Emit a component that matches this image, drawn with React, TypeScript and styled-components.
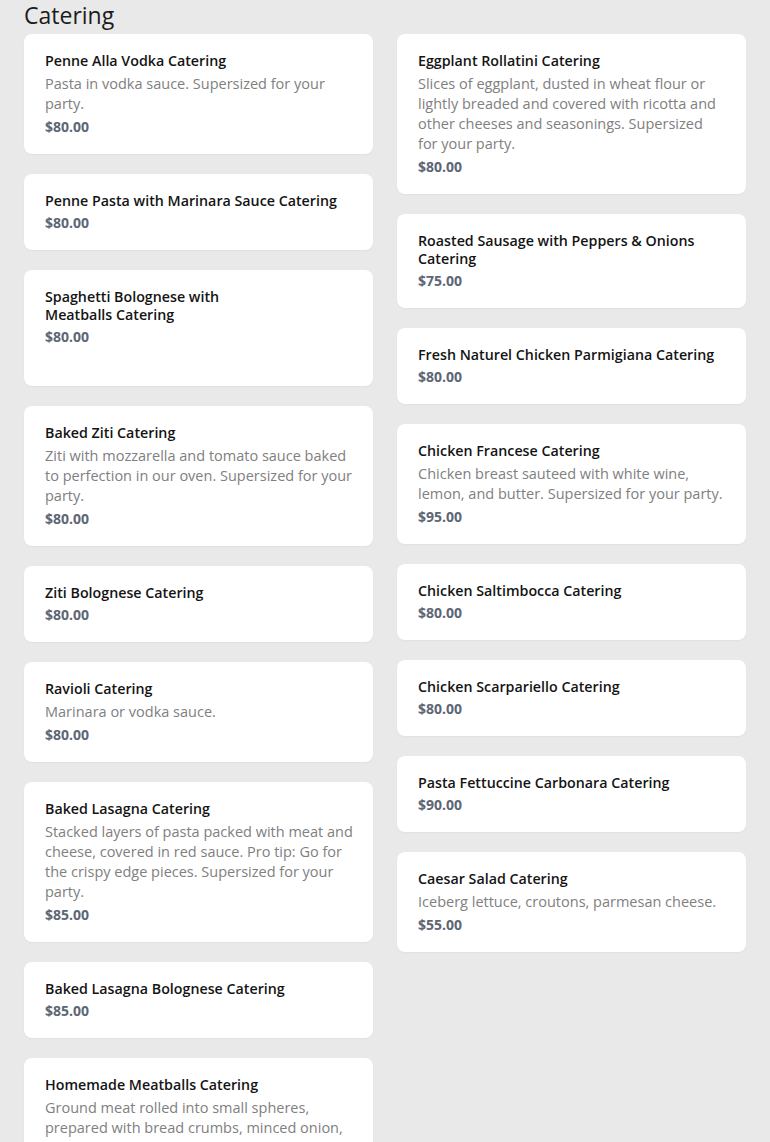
import styled, { createGlobalStyle } from "styled-components";

interface MenuItem {
  name: string;
  description?: string;
  price: string;
  hasImage?: boolean;
}

const leftItems: MenuItem[] = [
  {
    name: "Penne Alla Vodka Catering",
    description: "Pasta in vodka sauce. Supersized for your party.",
    price: "$80.00",
  },
  { name: "Penne Pasta with Marinara Sauce Catering", price: "$80.00" },
  { name: "Spaghetti Bolognese with Meatballs Catering", price: "$80.00", hasImage: true },
  {
    name: "Baked Ziti Catering",
    description:
      "Ziti with mozzarella and tomato sauce baked to perfection in our oven. Supersized for your party.",
    price: "$80.00",
  },
  { name: "Ziti Bolognese Catering", price: "$80.00" },
  { name: "Ravioli Catering", description: "Marinara or vodka sauce.", price: "$80.00" },
  {
    name: "Baked Lasagna Catering",
    description:
      "Stacked layers of pasta packed with meat and cheese, covered in red sauce. Pro tip: Go for the crispy edge pieces. Supersized for your party.",
    price: "$85.00",
  },
  { name: "Baked Lasagna Bolognese Catering", price: "$85.00" },
  {
    name: "Homemade Meatballs Catering",
    description:
      "Ground meat rolled into small spheres, prepared with bread crumbs, minced onion, eggs, butter and seasoning. Supersized for your party.",
    price: "$80.00",
  },
];

const rightItems: MenuItem[] = [
  {
    name: "Eggplant Rollatini Catering",
    description:
      "Slices of eggplant, dusted in wheat flour or lightly breaded and covered with ricotta and other cheeses and seasonings. Supersized for your party.",
    price: "$80.00",
  },
  { name: "Roasted Sausage with Peppers & Onions Catering", price: "$75.00" },
  { name: "Fresh Naturel Chicken Parmigiana Catering", price: "$80.00" },
  {
    name: "Chicken Francese Catering",
    description: "Chicken breast sauteed with white wine, lemon, and butter. Supersized for your party.",
    price: "$95.00",
  },
  { name: "Chicken Saltimbocca Catering", price: "$80.00" },
  { name: "Chicken Scarpariello Catering", price: "$80.00" },
  { name: "Pasta Fettuccine Carbonara Catering", price: "$90.00" },
  {
    name: "Caesar Salad Catering",
    description: "Iceberg lettuce, croutons, parmesan cheese.",
    price: "$55.00",
  },
];

const ItemCard = ({ item }: { item: MenuItem }) => (
  <Card>
    <CardText>
      <ItemName>{item.name}</ItemName>
      {item.description && <ItemDescription>{item.description}</ItemDescription>}
      <ItemPrice>{item.price}</ItemPrice>
    </CardText>
    {item.hasImage && <ImageSlot />}
  </Card>
);

const App = () => {
  return (
    <>
      <GlobalStyle />
      <Page>
        <SectionTitle>Catering</SectionTitle>
        <Columns>
          <Column>
            {leftItems.map((item) => (
              <ItemCard key={item.name} item={item} />
            ))}
          </Column>
          <Column>
            {rightItems.map((item) => (
              <ItemCard key={item.name} item={item} />
            ))}
          </Column>
        </Columns>
      </Page>
    </>
  );
};

const GlobalStyle = createGlobalStyle`
  html, body {
    margin: 0;
    background: #e9e9e9;
    font-family: "Open Sans", "Noto Sans", sans-serif;
  }
`;

const Page = styled.div`
  padding: 0 24px 40px;
`;

const SectionTitle = styled.h2`
  margin: 0 0 4px;
  font-size: 23px;
  font-weight: 400;
  line-height: 30px;
  color: #1c1c1c;
`;

const Columns = styled.div`
  display: grid;
  grid-template-columns: 1fr 1fr;
  gap: 24px;
  align-items: start;
`;

const Column = styled.div`
  display: flex;
  flex-direction: column;
  gap: 20px;
`;

const Card = styled.div`
  display: flex;
  gap: 16px;
  background: #ffffff;
  border-radius: 8px;
  padding: 18px 20px 17px 21px;
  box-shadow: 0 1px 2px rgba(0, 0, 0, 0.04);
`;

const CardText = styled.div`
  flex: 1;
  min-width: 0;
  display: flex;
  flex-direction: column;
`;

const ItemName = styled.div`
  font-size: 14.25px;
  font-weight: 600;
  line-height: 18px;
  color: #141414;
`;

const ItemDescription = styled.div`
  margin-top: 4px;
  font-size: 14.5px;
  line-height: 20px;
  color: #808080;
`;

const ItemPrice = styled.div`
  margin-top: 3px;
  font-size: 14px;
  font-weight: 700;
  line-height: 20px;
  color: #5d6674;
`;

const ImageSlot = styled.div`
  flex: none;
  width: 80px;
  height: 81px;
`;

export default App;
